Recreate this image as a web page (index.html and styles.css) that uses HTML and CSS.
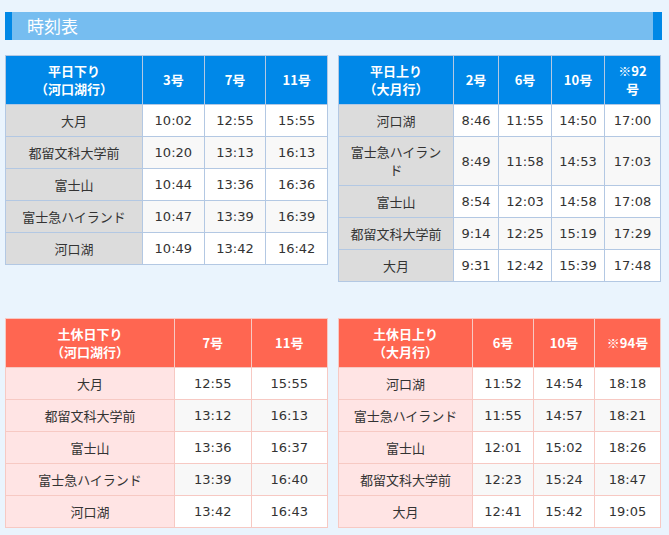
FILE: index.html
```html
<!DOCTYPE html>
<html lang="ja">
<head>
<meta charset="utf-8">
<title>時刻表</title>
<link rel="stylesheet" href="styles.css">
</head>
<body>
<div class="page">
  <h2 class="title">時刻表</h2>

  <div class="grid">
    <table class="tt blue">
      <colgroup><col class="c-a1"><col><col><col></colgroup>
      <thead>
        <tr><th>平日下り<br>（河口湖行）</th><th>3号</th><th>7号</th><th>11号</th></tr>
      </thead>
      <tbody>
        <tr><th>大月</th><td>10:02</td><td>12:55</td><td>15:55</td></tr>
        <tr><th>都留文科大学前</th><td>10:20</td><td>13:13</td><td>16:13</td></tr>
        <tr><th>富士山</th><td>10:44</td><td>13:36</td><td>16:36</td></tr>
        <tr><th>富士急ハイランド</th><td>10:47</td><td>13:39</td><td>16:39</td></tr>
        <tr><th>河口湖</th><td>10:49</td><td>13:42</td><td>16:42</td></tr>
      </tbody>
    </table>

    <table class="tt blue">
      <colgroup><col class="c-b1"><col class="c-b2"><col class="c-b3"><col class="c-b4"><col></colgroup>
      <thead>
        <tr><th>平日上り<br>（大月行）</th><th>2号</th><th>6号</th><th>10号</th><th>※92<br>号</th></tr>
      </thead>
      <tbody>
        <tr><th>河口湖</th><td>8:46</td><td>11:55</td><td>14:50</td><td>17:00</td></tr>
        <tr><th class="wrap">富士急ハイラン<br>ド</th><td>8:49</td><td>11:58</td><td>14:53</td><td>17:03</td></tr>
        <tr><th>富士山</th><td>8:54</td><td>12:03</td><td>14:58</td><td>17:08</td></tr>
        <tr><th>都留文科大学前</th><td>9:14</td><td>12:25</td><td>15:19</td><td>17:29</td></tr>
        <tr><th>大月</th><td>9:31</td><td>12:42</td><td>15:39</td><td>17:48</td></tr>
      </tbody>
    </table>
  </div>

  <div class="grid grid-low">
    <table class="tt red">
      <colgroup><col class="c-c1"><col><col></colgroup>
      <thead>
        <tr><th>土休日下り<br>（河口湖行）</th><th>7号</th><th>11号</th></tr>
      </thead>
      <tbody>
        <tr><th>大月</th><td>12:55</td><td>15:55</td></tr>
        <tr><th>都留文科大学前</th><td>13:12</td><td>16:13</td></tr>
        <tr><th>富士山</th><td>13:36</td><td>16:37</td></tr>
        <tr><th>富士急ハイランド</th><td>13:39</td><td>16:40</td></tr>
        <tr><th>河口湖</th><td>13:42</td><td>16:43</td></tr>
      </tbody>
    </table>

    <table class="tt red">
      <colgroup><col class="c-d1"><col class="c-d2"><col class="c-d3"><col></colgroup>
      <thead>
        <tr><th>土休日上り<br>（大月行）</th><th>6号</th><th>10号</th><th>※94号</th></tr>
      </thead>
      <tbody>
        <tr><th>河口湖</th><td>11:52</td><td>14:54</td><td>18:18</td></tr>
        <tr><th>富士急ハイランド</th><td>11:55</td><td>14:57</td><td>18:21</td></tr>
        <tr><th>富士山</th><td>12:01</td><td>15:02</td><td>18:26</td></tr>
        <tr><th>都留文科大学前</th><td>12:23</td><td>15:24</td><td>18:47</td></tr>
        <tr><th>大月</th><td>12:41</td><td>15:42</td><td>19:05</td></tr>
      </tbody>
    </table>
  </div>
</div>
</body>
</html>
```

FILE: styles.css
```css
html, body {
  margin: 0;
  padding: 0;
  background: #eaf4fd;
}
body {
  font-family: "DejaVu Sans", "Noto Sans CJK JP", sans-serif;
  color: #333333;
  font-size: 13px;
}
.page {
  width: 657px;
  padding: 12px 0 0 5px;
}
.title {
  margin: 0;
  height: 28px;
  line-height: 28px;
  background: #76bdf0;
  border-left: 7px solid #0088e6;
  border-right: 9px solid #0088e6;
  padding-left: 15px;
  font-family: "Noto Sans CJK JP", sans-serif;
  font-weight: normal;
  font-size: 17px;
  color: #ffffff;
}
.grid {
  display: grid;
  grid-template-columns: 323px 323px;
  column-gap: 10px;
  align-items: start;
  margin-top: 15px;
}
.grid-low {
  margin-top: 36px;
}
.tt {
  width: 323px;
  border-collapse: collapse;
  table-layout: fixed;
}
.tt th, .tt td {
  padding: 7px 2px;
  line-height: 17px;
  text-align: center;
  font-size: 13px;
}
.tt thead th {
  padding: 6px 2px;
  line-height: 18px;
  color: #ffffff;
  font-weight: bold;
  font-family: "Noto Sans CJK JP", sans-serif;
}
.tt tbody th {
  font-weight: normal;
  font-family: "Noto Sans CJK JP", sans-serif;
}
.tt tbody th.wrap {
  padding: 6px 2px;
  line-height: 18px;
}
.tt td {
  background: #ffffff;
}
.tt tbody tr:nth-child(even) td {
  background: #f8f8f8;
}
.blue th, .blue td {
  border: 1px solid #b3c8e3;
}
.blue thead th {
  background: #0088e8;
}
.blue tbody th {
  background: #dcdcdc;
}
.red th, .red td {
  border: 1px solid #f7c9c3;
}
.red thead th {
  background: #ff6651;
}
.red tbody th {
  background: #ffe4e4;
}
.c-a1 { width: 137px; }
.c-b1 { width: 115px; }
.c-b2 { width: 45px; }
.c-b3 { width: 53px; }
.c-b4 { width: 53px; }
.c-c1 { width: 169px; }
.c-d1 { width: 134px; }
.c-d2 { width: 61px; }
.c-d3 { width: 61px; }
```
